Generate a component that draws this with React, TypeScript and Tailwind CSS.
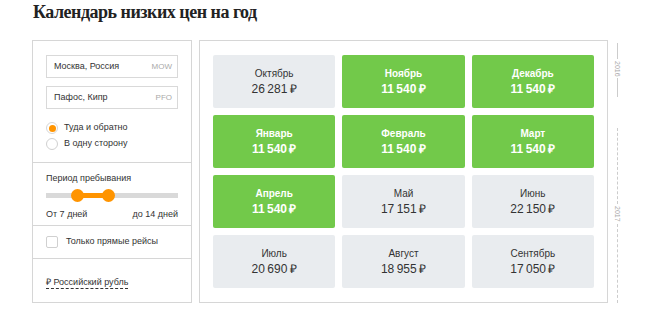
import React from "react";

const T = "\u2009";

type Tile = { m: string; p: string; g: boolean };

const tiles: Tile[] = [
  { m: "Октябрь", p: `26${T}281${T}₽`, g: false },
  { m: "Ноябрь", p: `11${T}540${T}₽`, g: true },
  { m: "Декабрь", p: `11${T}540${T}₽`, g: true },
  { m: "Январь", p: `11${T}540${T}₽`, g: true },
  { m: "Февраль", p: `11${T}540${T}₽`, g: true },
  { m: "Март", p: `11${T}540${T}₽`, g: true },
  { m: "Апрель", p: `11${T}540${T}₽`, g: true },
  { m: "Май", p: `17${T}151${T}₽`, g: false },
  { m: "Июнь", p: `22${T}150${T}₽`, g: false },
  { m: "Июль", p: `20${T}690${T}₽`, g: false },
  { m: "Август", p: `18${T}955${T}₽`, g: false },
  { m: "Сентябрь", p: `17${T}050${T}₽`, g: false },
];

export default function App() {
  return (
    <div
      className="w-[645px] h-[315px] bg-white overflow-hidden text-[#333]"
      style={{ fontFamily: '"Liberation Sans", Arial, sans-serif' }}
    >
      <h1
        className="pl-[33px] h-[24px] leading-[24px] mb-[16px] text-[18px] tracking-[-0.5px] font-bold text-[#222]"
        style={{ fontFamily: '"Liberation Serif", "Times New Roman", serif' }}
      >
        Календарь низких цен на год
      </h1>
      <div className="flex pl-[32px]">
        {/* Left panel */}
        <div className="w-[160px] h-[263px] border border-[#d6d6d6] flex flex-col">
          <div className="px-[13px] pt-[14px] pb-[10px] border-b border-[#d6d6d6]">
            <div className="h-[23px] border border-[#d9d9d9] flex items-center justify-between pl-[7px] pr-[5px]">
              <span className="text-[9px]">Москва, Россия</span>
              <span className="text-[8px] text-[#aaa]">MOW</span>
            </div>
            <div className="mt-[8px] h-[23px] border border-[#d9d9d9] flex items-center justify-between pl-[7px] pr-[5px]">
              <span className="text-[9px]">Пафос, Кипр</span>
              <span className="text-[8px] text-[#aaa]">PFO</span>
            </div>
            <div className="mt-[11px] h-[16px] flex items-center">
              <span className="w-[12px] h-[12px] rounded-full border border-[#d6d6d6] flex items-center justify-center">
                <span className="w-[7px] h-[7px] rounded-full bg-[#ff9400]" />
              </span>
              <span className="ml-[6px] text-[9px]">Туда и обратно</span>
            </div>
            <div className="h-[16px] flex items-center">
              <span className="w-[12px] h-[12px] rounded-full border border-[#d0d0d0]" />
              <span className="ml-[6px] text-[9px]">В одну сторону</span>
            </div>
          </div>
          <div className="px-[13px] pt-[8px] h-[63px] border-b border-[#d6d6d6]">
            <div className="h-[14px] leading-[14px] text-[9px]">Период пребывания</div>
            <div className="mt-[3px] h-[14px] relative flex items-center">
              <div className="w-full h-[5px] bg-[#d9d9d9]" />
              <div className="absolute left-[31px] w-[31px] h-[5px] bg-[#ff9400]" />
              <div className="absolute left-[25px] w-[13px] h-[13px] rounded-full bg-[#ff9400]" />
              <div className="absolute left-[56px] w-[13px] h-[13px] rounded-full bg-[#ff9400]" />
            </div>
            <div className="mt-[5px] h-[14px] leading-[14px] flex justify-between text-[9px]">
              <span>От 7 дней</span>
              <span>до 14 дней</span>
            </div>
          </div>
          <div className="px-[13px] h-[33px] flex items-center border-b border-[#d6d6d6]">
            <span className="w-[12px] h-[12px] rounded-[2px] border border-[#d0d0d0]" />
            <span className="ml-[8px] text-[9px]">Только прямые рейсы</span>
          </div>
          <div className="px-[13px] pt-[9px]">
            <span className="text-[9px] leading-[14px] border-b border-dashed border-[#333] pb-[1px]">
              ₽ Российский рубль
            </span>
          </div>
        </div>

        {/* Right panel */}
        <div className="ml-[7px] w-[409px] h-[263px] border border-[#d6d6d6] px-[13px] py-[14px]">
          <div className="grid grid-cols-3 grid-rows-4 gap-[7px] h-full">
            {tiles.map((t) => (
              <div
                key={t.m}
                className={
                  t.g
                    ? "rounded-[2px] bg-[#72c94a] text-white flex flex-col items-center justify-center font-bold"
                    : "rounded-[2px] bg-[#e9ecef] text-[#333] flex flex-col items-center justify-center"
                }
              >
                <span className="text-[10px] leading-[13px]">{t.m}</span>
                <span className="text-[12px] leading-[16px] mt-[1px]">{t.p}</span>
              </div>
            ))}
          </div>
        </div>

        {/* Timeline */}
        <div className="ml-[4px] w-[10px] h-[263px] flex flex-col items-center">
          <div className="h-[3px]" />
          <div className="h-[16px] border-l border-[#ccc]" />
          <div className="h-[19px] text-[7px] text-[#aaa] leading-[10px] flex items-center justify-center [writing-mode:vertical-rl]">
            2016
          </div>
          <div className="h-[19px] border-l border-[#ccc]" />
          <div className="h-[31px]" />
          <div className="h-[76px] border-l border-dashed border-[#ccc]" />
          <div className="h-[20px] text-[7px] text-[#aaa] leading-[10px] flex items-center justify-center [writing-mode:vertical-rl]">
            2017
          </div>
          <div className="flex-1 border-l border-dashed border-[#ccc]" />
        </div>
      </div>
    </div>
  );
}
